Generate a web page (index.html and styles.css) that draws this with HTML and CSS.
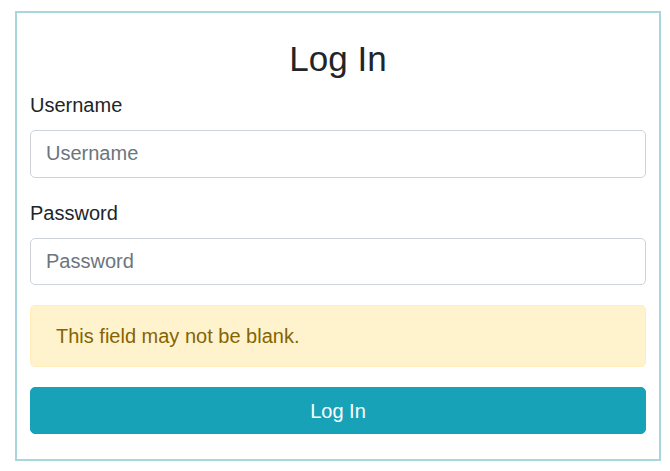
FILE: index.html
```html
<!DOCTYPE html>
<html lang="en">
<head>
<meta charset="utf-8">
<title>Log In</title>
<link rel="stylesheet" href="styles.css">
</head>
<body>
<div class="page">
  <form class="card">
    <h3 class="title">Log In</h3>
    <div class="form-group">
      <label class="label" for="username">Username</label>
      <input class="input" id="username" type="text" placeholder="Username">
    </div>
    <div class="form-group">
      <label class="label" for="password">Password</label>
      <input class="input" id="password" type="password" placeholder="Password">
    </div>
    <div class="alert">This field may not be blank.</div>
    <button class="btn" type="button">Log In</button>
  </form>
</div>
</body>
</html>
```
FILE: styles.css
```css
html, body {
  margin: 0;
  padding: 0;
  background: #ffffff;
}
body {
  font-family: "Liberation Sans", Arial, sans-serif;
  font-size: 20px;
  line-height: 1.5;
  color: #212529;
}
.page {
  padding: 11px 0 0 15px;
}
.card {
  box-sizing: border-box;
  width: 646px;
  border: 2px solid #a8d6df;
  padding: 25px 13px;
  display: flex;
  flex-direction: column;
}
.title {
  margin: 0 0 10px 0;
  font-size: 35px;
  font-weight: 400;
  line-height: 1.2;
  text-align: center;
}
.form-group {
  display: flex;
  flex-direction: column;
  margin-bottom: 20px;
}
.label {
  display: block;
  margin-bottom: 10px;
}
.input {
  box-sizing: border-box;
  height: 47.5px;
  width: 100%;
  padding: 7.75px 15px;
  font-family: inherit;
  font-size: 20px;
  line-height: 1.5;
  color: #495057;
  background: #ffffff;
  border: 1px solid #ced4da;
  border-radius: 5px;
  outline: none;
}
.input::placeholder {
  color: #6c757d;
  opacity: 1;
}
.alert {
  box-sizing: border-box;
  padding: 15px 25px;
  margin-bottom: 20px;
  color: #856404;
  background: #fff3cd;
  border: 1px solid #ffeeba;
  border-radius: 5px;
}
.btn {
  box-sizing: border-box;
  width: 100%;
  height: 47px;
  padding: 7.5px 15px;
  font-family: inherit;
  font-size: 20px;
  line-height: 1.5;
  color: #ffffff;
  background: #17a2b8;
  border: 1px solid #17a2b8;
  border-radius: 5px;
  text-align: center;
  cursor: pointer;
}
```
